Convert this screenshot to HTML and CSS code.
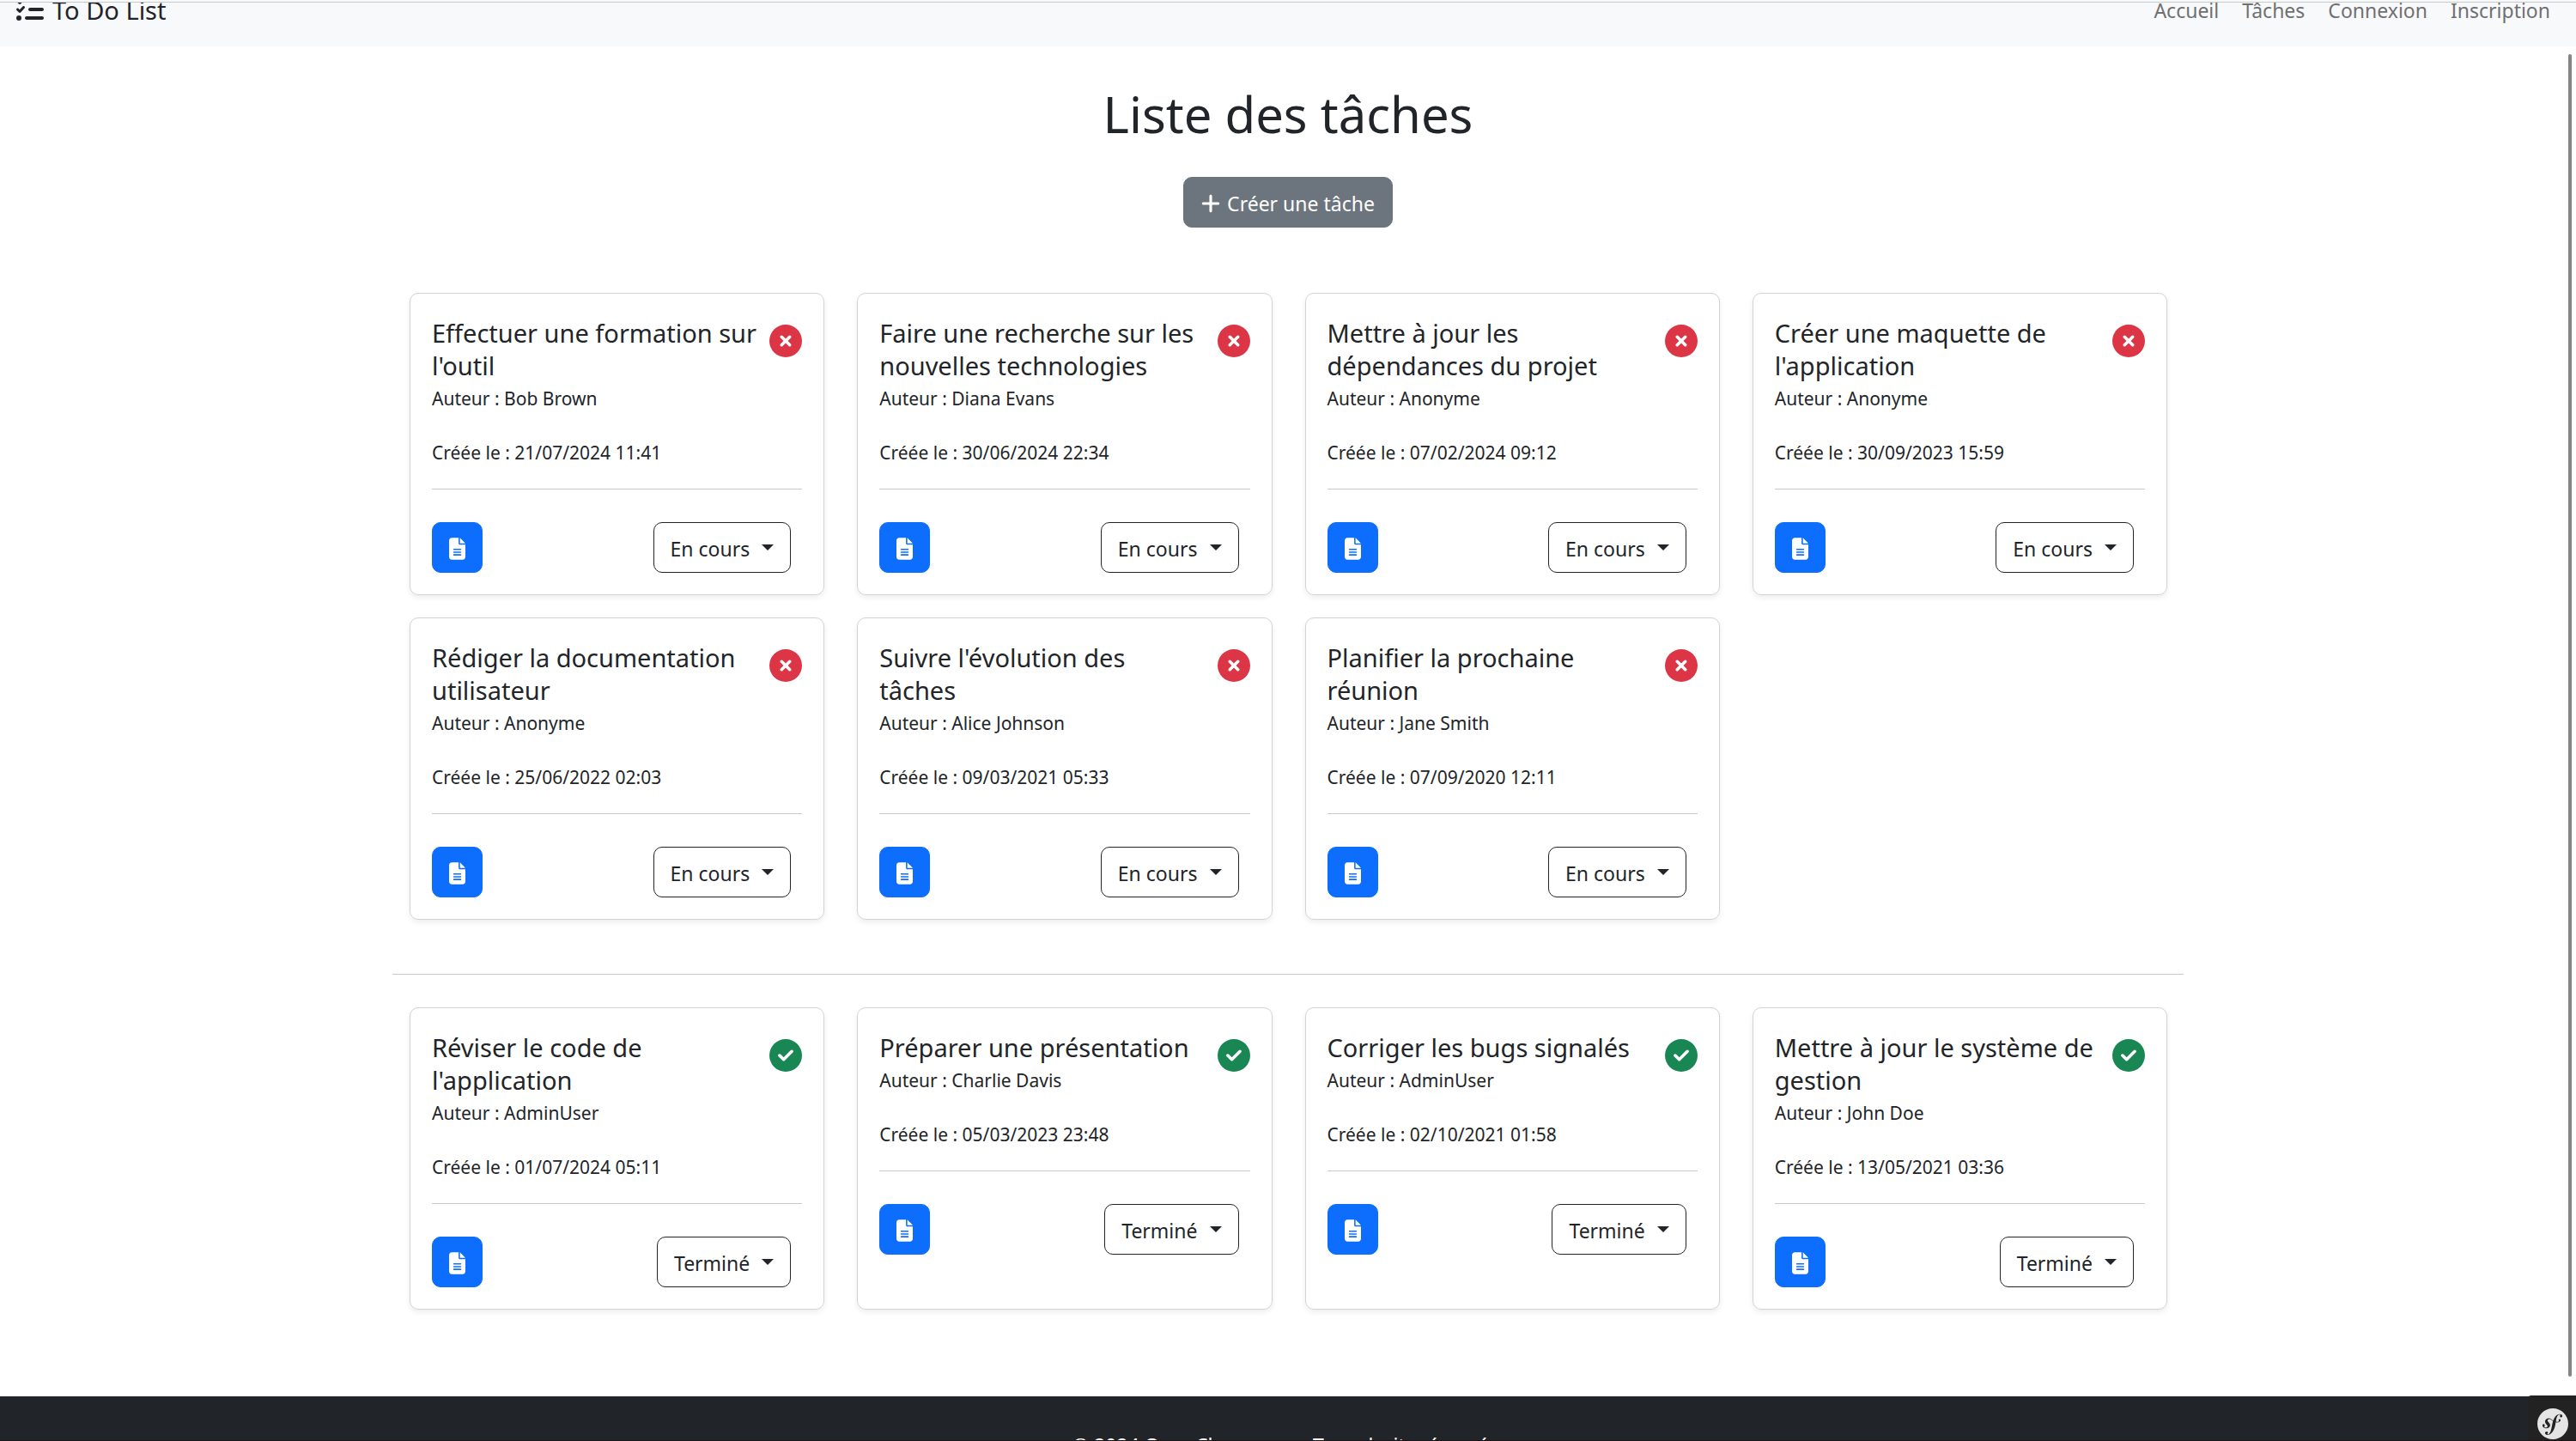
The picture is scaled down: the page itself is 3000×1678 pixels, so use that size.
FILE: index.html
```html
<!DOCTYPE html>
<html lang="fr">
<head>
<meta charset="utf-8">
<meta name="viewport" content="width=device-width, initial-scale=1">
<title>To Do List - Liste des tâches</title>
<link rel="stylesheet" href="styles.css">
</head>
<body>
<svg class="sprite" aria-hidden="true">
  <symbol id="i-list" viewBox="0 0 512 512"><path d="M152.1 38.2c9.9 8.9 10.7 24 1.8 33.9l-72 80c-4.4 4.9-10.6 7.8-17.2 7.9s-12.9-2.4-17.6-7L7 113C-2.3 103.6-2.3 88.4 7 79s24.6-9.4 33.9 0l22.1 22.1 55.1-61.2c8.9-9.9 24-10.7 33.9-1.8zm0 160c9.9 8.9 10.7 24 1.8 33.9l-72 80c-4.4 4.9-10.6 7.8-17.2 7.9s-12.9-2.4-17.6-7L7 273c-9.4-9.4-9.4-24.6 0-33.9s24.6-9.4 33.9 0l22.1 22.1 55.1-61.2c8.9-9.9 24-10.7 33.9-1.8zM224 96c0-17.7 14.3-32 32-32l224 0c17.7 0 32 14.3 32 32s-14.3 32-32 32l-224 0c-17.7 0-32-14.3-32-32zm0 160c0-17.7 14.3-32 32-32l224 0c17.7 0 32 14.3 32 32s-14.3 32-32 32l-224 0c-17.7 0-32-14.3-32-32zM160 416c0-17.7 14.3-32 32-32l288 0c17.7 0 32 14.3 32 32s-14.3 32-32 32l-288 0c-17.7 0-32-14.3-32-32zM48 368a48 48 0 1 1 0 96 48 48 0 1 1 0-96z"/></symbol>
  <symbol id="i-plus" viewBox="0 0 448 512"><path d="M256 80c0-17.7-14.3-32-32-32s-32 14.3-32 32V224H48c-17.7 0-32 14.3-32 32s14.3 32 32 32H192V432c0 17.7 14.3 32 32 32s32-14.3 32-32V288H400c17.7 0 32-14.3 32-32s-14.3-32-32-32H256V80z"/></symbol>
  <symbol id="i-file" viewBox="0 0 384 512"><path d="M64 0C28.7 0 0 28.7 0 64V448c0 35.3 28.7 64 64 64H320c35.3 0 64-28.7 64-64V160H256c-17.7 0-32-14.3-32-32V0H64zM256 0V128H384L256 0zM112 256H272c8.8 0 16 7.2 16 16s-7.2 16-16 16H112c-8.8 0-16-7.2-16-16s7.2-16 16-16zm0 64H272c8.8 0 16 7.2 16 16s-7.2 16-16 16H112c-8.8 0-16-7.2-16-16s7.2-16 16-16zm0 64H272c8.8 0 16 7.2 16 16s-7.2 16-16 16H112c-8.8 0-16-7.2-16-16s7.2-16 16-16z"/></symbol>
  <symbol id="i-no" viewBox="0 0 512 512"><path d="M256 512A256 256 0 1 0 256 0a256 256 0 1 0 0 512zM175 175c9.4-9.4 24.6-9.4 33.9 0l47 47 47-47c9.4-9.4 24.6-9.4 33.9 0s9.4 24.6 0 33.9l-47 47 47 47c9.4 9.4 9.4 24.6 0 33.9s-24.6 9.4-33.9 0l-47-47-47 47c-9.4 9.4-24.6 9.4-33.9 0s-9.4-24.6 0-33.9l47-47-47-47c-9.4-9.4-9.4-24.6 0-33.9z"/></symbol>
  <symbol id="i-yes" viewBox="0 0 512 512"><path d="M256 512A256 256 0 1 0 256 0a256 256 0 1 0 0 512zM369 209L241 337c-9.4 9.4-24.6 9.4-33.9 0l-64-64c-9.4-9.4-9.4-24.6 0-33.9s24.6-9.4 33.9 0l47 47L335 175c9.4-9.4 24.6-9.4 33.9 0s9.4 24.6 0 33.9z"/></symbol>
</svg>

<div class="app">
  <header class="topbar">
    <nav class="navbar">
      <a class="brand" href="#"><svg class="brand-icon" aria-hidden="true"><use href="#i-list"/></svg>To Do List</a>
      <div class="links">
        <a href="#">Accueil</a>
        <a href="#">Tâches</a>
        <a href="#">Connexion</a>
        <a href="#">Inscription</a>
      </div>
    </nav>
  </header>

  <main class="page">
    <h1>Liste des tâches</h1>
    <a class="btn btn-create" href="#"><svg class="plus-icon" aria-hidden="true"><use href="#i-plus"/></svg>Créer une tâche</a>

    <section class="tasks" aria-label="Tâches en cours">
      <article class="card">
        <div class="head"><h2>Effectuer une formation sur l'outil</h2><svg class="status open" aria-hidden="true"><use href="#i-no"/></svg></div>
        <p>Auteur : Bob Brown</p>
        <p class="date">Créée le : 21/07/2024 11:41</p>
        <hr>
        <div class="actions"><a class="btn btn-file" href="#" aria-label="Voir la tâche"><svg class="file-icon" aria-hidden="true"><use href="#i-file"/></svg></a><button class="btn btn-state" type="button" aria-haspopup="true">En cours</button></div>
      </article>
      <article class="card">
        <div class="head"><h2>Faire une recherche sur les nouvelles technologies</h2><svg class="status open" aria-hidden="true"><use href="#i-no"/></svg></div>
        <p>Auteur : Diana Evans</p>
        <p class="date">Créée le : 30/06/2024 22:34</p>
        <hr>
        <div class="actions"><a class="btn btn-file" href="#" aria-label="Voir la tâche"><svg class="file-icon" aria-hidden="true"><use href="#i-file"/></svg></a><button class="btn btn-state" type="button" aria-haspopup="true">En cours</button></div>
      </article>
      <article class="card">
        <div class="head"><h2>Mettre à jour les dépendances du projet</h2><svg class="status open" aria-hidden="true"><use href="#i-no"/></svg></div>
        <p>Auteur : Anonyme</p>
        <p class="date">Créée le : 07/02/2024 09:12</p>
        <hr>
        <div class="actions"><a class="btn btn-file" href="#" aria-label="Voir la tâche"><svg class="file-icon" aria-hidden="true"><use href="#i-file"/></svg></a><button class="btn btn-state" type="button" aria-haspopup="true">En cours</button></div>
      </article>
      <article class="card">
        <div class="head"><h2>Créer une maquette de l'application</h2><svg class="status open" aria-hidden="true"><use href="#i-no"/></svg></div>
        <p>Auteur : Anonyme</p>
        <p class="date">Créée le : 30/09/2023 15:59</p>
        <hr>
        <div class="actions"><a class="btn btn-file" href="#" aria-label="Voir la tâche"><svg class="file-icon" aria-hidden="true"><use href="#i-file"/></svg></a><button class="btn btn-state" type="button" aria-haspopup="true">En cours</button></div>
      </article>
      <article class="card">
        <div class="head"><h2>Rédiger la documentation utilisateur</h2><svg class="status open" aria-hidden="true"><use href="#i-no"/></svg></div>
        <p>Auteur : Anonyme</p>
        <p class="date">Créée le : 25/06/2022 02:03</p>
        <hr>
        <div class="actions"><a class="btn btn-file" href="#" aria-label="Voir la tâche"><svg class="file-icon" aria-hidden="true"><use href="#i-file"/></svg></a><button class="btn btn-state" type="button" aria-haspopup="true">En cours</button></div>
      </article>
      <article class="card">
        <div class="head"><h2>Suivre l'évolution des tâches</h2><svg class="status open" aria-hidden="true"><use href="#i-no"/></svg></div>
        <p>Auteur : Alice Johnson</p>
        <p class="date">Créée le : 09/03/2021 05:33</p>
        <hr>
        <div class="actions"><a class="btn btn-file" href="#" aria-label="Voir la tâche"><svg class="file-icon" aria-hidden="true"><use href="#i-file"/></svg></a><button class="btn btn-state" type="button" aria-haspopup="true">En cours</button></div>
      </article>
      <article class="card">
        <div class="head"><h2>Planifier la prochaine réunion</h2><svg class="status open" aria-hidden="true"><use href="#i-no"/></svg></div>
        <p>Auteur : Jane Smith</p>
        <p class="date">Créée le : 07/09/2020 12:11</p>
        <hr>
        <div class="actions"><a class="btn btn-file" href="#" aria-label="Voir la tâche"><svg class="file-icon" aria-hidden="true"><use href="#i-file"/></svg></a><button class="btn btn-state" type="button" aria-haspopup="true">En cours</button></div>
      </article>
    </section>

    <hr class="divider">

    <section class="tasks" aria-label="Tâches terminées">
      <article class="card">
        <div class="head"><h2>Réviser le code de l'application</h2><svg class="status done" aria-hidden="true"><use href="#i-yes"/></svg></div>
        <p>Auteur : AdminUser</p>
        <p class="date">Créée le : 01/07/2024 05:11</p>
        <hr>
        <div class="actions"><a class="btn btn-file" href="#" aria-label="Voir la tâche"><svg class="file-icon" aria-hidden="true"><use href="#i-file"/></svg></a><button class="btn btn-state" type="button" aria-haspopup="true">Terminé</button></div>
      </article>
      <article class="card">
        <div class="head"><h2>Préparer une présentation</h2><svg class="status done" aria-hidden="true"><use href="#i-yes"/></svg></div>
        <p>Auteur : Charlie Davis</p>
        <p class="date">Créée le : 05/03/2023 23:48</p>
        <hr>
        <div class="actions"><a class="btn btn-file" href="#" aria-label="Voir la tâche"><svg class="file-icon" aria-hidden="true"><use href="#i-file"/></svg></a><button class="btn btn-state" type="button" aria-haspopup="true">Terminé</button></div>
      </article>
      <article class="card">
        <div class="head"><h2>Corriger les bugs signalés</h2><svg class="status done" aria-hidden="true"><use href="#i-yes"/></svg></div>
        <p>Auteur : AdminUser</p>
        <p class="date">Créée le : 02/10/2021 01:58</p>
        <hr>
        <div class="actions"><a class="btn btn-file" href="#" aria-label="Voir la tâche"><svg class="file-icon" aria-hidden="true"><use href="#i-file"/></svg></a><button class="btn btn-state" type="button" aria-haspopup="true">Terminé</button></div>
      </article>
      <article class="card">
        <div class="head"><h2>Mettre à jour le système de gestion</h2><svg class="status done" aria-hidden="true"><use href="#i-yes"/></svg></div>
        <p>Auteur : John Doe</p>
        <p class="date">Créée le : 13/05/2021 03:36</p>
        <hr>
        <div class="actions"><a class="btn btn-file" href="#" aria-label="Voir la tâche"><svg class="file-icon" aria-hidden="true"><use href="#i-file"/></svg></a><button class="btn btn-state" type="button" aria-haspopup="true">Terminé</button></div>
      </article>
    </section>
  </main>

  <footer class="footer">© 2024 OpenClassrooms. Tous droits réservés.</footer>
</div>

<div class="scroll-thumb"></div>
<button class="debug-toggle" type="button" aria-label="Symfony">
  <svg class="debug-logo" viewBox="0 0 24 24" aria-hidden="true"><path d="M24 12c0 6.628-5.372 12-12 12S0 18.628 0 12 5.372 0 12 0s12 5.372 12 12zm-6.753-7.561c-1.22.042-2.283.715-3.075 1.644-.878 1.02-1.461 2.229-1.881 3.461-.753-.614-1.332-1.414-2.539-1.761-.966-.297-2.015-.105-2.813.514-.41.319-.71.757-.861 1.254-.36 1.176.381 2.225.719 2.6l.737.79c.15.154.519.56.339 1.138-.193.631-.951 1.037-1.732.799-.348-.106-.848-.366-.734-.73.045-.15.152-.263.21-.391.052-.11.077-.194.095-.242.141-.465-.053-1.07-.551-1.223-.465-.143-.939-.03-1.125.566-.209.679.117 1.913 1.86 2.449 2.04.628 3.765-.484 4.009-1.932.153-.907-.255-1.582-1.006-2.447l-.612-.677c-.371-.37-.497-1.002-.114-1.485.324-.409.785-.584 1.539-.379 1.103.3 1.594 1.063 2.412 1.68-.338 1.11-.56 2.223-.759 3.222l-.123.746c-.585 3.07-1.033 4.757-2.194 5.726-.234.166-.57.416-1.073.434-.266.005-.352-.176-.355-.257-.006-.184.15-.271.255-.353.154-.083.39-.224.372-.674-.016-.532-.456-.994-1.094-.973-.477.017-1.203.465-1.176 1.286.028.85.819 1.485 2.012 1.444.638-.021 2.062-.281 3.464-1.949 1.633-1.911 2.09-4.101 2.434-5.706l.383-2.116c.213.024.441.042.69.048 2.032.044 3.049-1.01 3.064-1.776.01-.464-.304-.921-.744-.91-.386.009-.718.278-.806.654-.094.428.646.813.068 1.189-.41.266-1.146.452-2.184.3l.188-1.042c.386-1.976.859-4.407 2.661-4.467.132-.007.612.006.623.323.003.105-.022.134-.147.375-.115.155-.174.345-.168.537.017.504.4.836.957.816.743-.023.955-.748.945-1.119-.032-.874-.952-1.424-2.17-1.386z"/></svg>
</button>
</body>
</html>
```
FILE: styles.css
```css
* {
  box-sizing: border-box;
}

body {
  margin: 0;
  background: #fff;
  color: #212529;
  font-family: "Segoe UI", "Noto Sans", "Open Sans", sans-serif;
  font-size: 23px;
  line-height: 38px;
}

a {
  color: inherit;
  text-decoration: none;
}

h1,
h2,
p {
  margin: 0;
  font-weight: 400;
}

hr {
  margin: 0;
  border: 0;
  border-top: 1px solid #c8c9ca;
}

svg {
  display: block;
  flex: none;
  fill: currentColor;
}

.sprite {
  display: none;
}

.app {
  height: 100vh;
  overflow: hidden;
  border-bottom: 1px solid #1b1216;
}

/* Navigation, scrolled partly under the window edge */
.topbar {
  overflow: hidden;
  background: #f8f9fa;
  border-top: 1px solid #c8c9cb;
  box-shadow: 0 -2px #f8f9fa;
  margin-top: 2px;
}

.navbar {
  display: flex;
  justify-content: space-between;
  align-items: center;
  margin-top: -34px;
  padding: 24px 30px 23px 19px;
}

.brand {
  display: flex;
  align-items: center;
  gap: 10px;
  font-size: 29px;
}

.brand-icon {
  width: 32px;
  height: 32px;
  margin-bottom: 2px;
}

.links {
  display: flex;
  gap: 27px;
  color: #6f7071;
}

.page {
  display: flex;
  flex-direction: column;
  align-items: center;
  max-width: 2086px;
  margin: 0 auto;
  padding: 44px 0 101px;
}

h1 {
  margin-bottom: 38px;
  font-size: 58px;
  line-height: 70px;
}

.btn {
  display: flex;
  align-items: center;
  border: 1px solid;
  border-radius: 10px;
  font: inherit;
  line-height: 35px;
}

.btn-create {
  gap: 8px;
  margin-bottom: 76px;
  padding: 13px 20px 9px;
  background: #6c757d;
  border-color: #6c757d;
  color: #fff;
}

.plus-icon {
  width: 22px;
  height: 26px;
  margin-bottom: 2px;
}

.tasks {
  display: grid;
  grid-template-columns: repeat(4, minmax(0, 1fr));
  gap: 26px 38px;
  width: 100%;
  padding: 0 19px 0 20px;
}

.divider {
  width: 100%;
  margin: 63px 0 38px;
}

.card {
  padding: 27px 25px 25px;
  border: 1px solid #d3d3d4;
  border-radius: 10px;
  box-shadow: 0 3px 6px rgba(0, 0, 0, 0.075);
  font-size: 21px;
}

.head {
  display: flex;
  justify-content: space-between;
  gap: 13px;
}

h2 {
  font-size: 29px;
  line-height: 38px;
}

.status {
  width: 38px;
  height: 38px;
  margin-top: 9px;
  margin-bottom: -9px;
}

.open {
  color: #dc3545;
}

.done {
  color: #198754;
}

.date {
  margin: 25px 0 23px;
}

.actions {
  display: flex;
  justify-content: space-between;
  padding: 38px 13px 0 0;
  font-size: 23px;
}

.btn-file {
  justify-content: center;
  width: 59px;
  height: 59px;
  background: #0d6efd;
  border-color: #0d6efd;
  color: #fff;
}

.file-icon {
  width: 19px;
  height: 26px;
  margin-top: 2px;
}

.btn-state {
  gap: 14px;
  padding: 13px 19px 9px;
  background: #fff;
  border-color: #212529;
  color: #212529;
}

.btn-state::after {
  content: "";
  margin-bottom: 4px;
  border: 7px solid transparent;
  border-top-color: #212529;
  border-bottom: 0;
}

.footer {
  padding: 38px;
  background: #212529;
  color: #fff;
  text-align: center;
}

/* Scroll indicator and debug toolbar sit over the page */
.scroll-thumb {
  position: fixed;
  top: 63px;
  right: 5px;
  bottom: 75px;
  width: 4px;
  border-radius: 2px;
  background: #858585;
}

.debug-toggle {
  position: fixed;
  right: 0;
  bottom: 1px;
  padding: 15px 9px 1px 11px;
  border: 0;
  border-top-left-radius: 4px;
  background: #222;
  color: #e4e4e4;
}

.debug-logo {
  width: 36px;
  height: 36px;
}
```
